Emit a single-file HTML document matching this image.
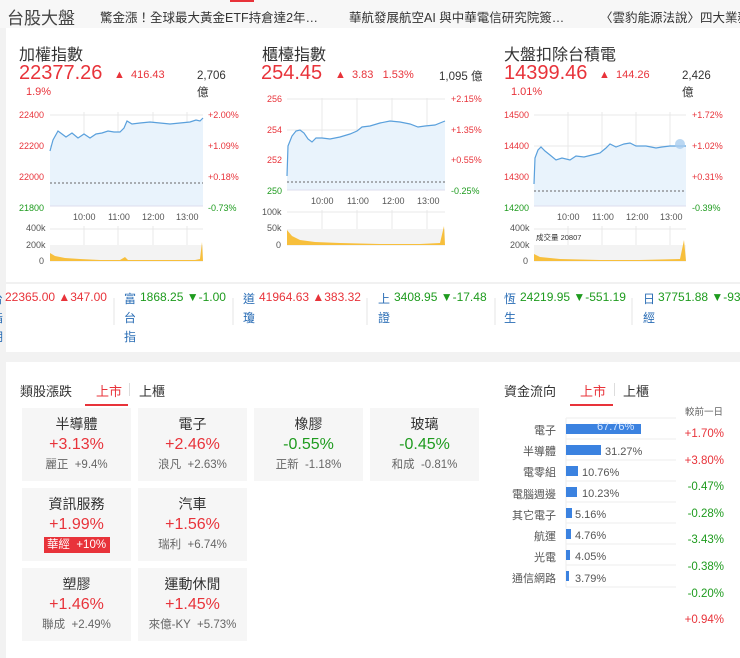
<!DOCTYPE html>
<html><head><meta charset="utf-8"><style>
*{margin:0;padding:0;box-sizing:border-box}
body{width:740px;height:658px;background:#f2f2f2;font-family:"Liberation Sans","Noto Sans CJK TC",sans-serif;position:relative;overflow:hidden;color:#333}
.a{position:absolute;white-space:nowrap}
.r{color:#e8333a}.g{color:#1e9b1e}.b{color:#2a6db5}
.card{position:absolute;background:#fff}
.tile{position:absolute;width:109px;height:73px;background:#f6f6f6;text-align:center}
.tile .n{font-size:14px;color:#333;margin-top:7px;line-height:18px}
.tile .p{font-size:16px;line-height:20px;margin-top:2px}
.tile .s{font-size:11.5px;color:#666;line-height:16px;margin-top:2px}
svg{position:absolute;overflow:visible}
svg text{font-family:"Liberation Sans",sans-serif;font-size:9px}
</style></head><body>
<div class="a" style="left:0;top:0;width:740px;height:28px;background:#f7f7f7"></div>
<div class="a" style="left:230px;top:0;width:24px;height:2px;background:#e8333a"></div>
<div class="a" style="left:7px;top:4px;font-size:17px;color:#444">台股大盤</div>
<div class="a" style="left:100px;top:7px;font-size:12.5px;color:#333">驚金漲！全球最大黃金ETF持倉達2年…</div>
<div class="a" style="left:349px;top:7px;font-size:12.5px;color:#333">華航發展航空AI 與中華電信研究院簽…</div>
<div class="a" style="left:600px;top:7px;font-size:12.5px;color:#333">〈雲豹能源法說〉四大業務</div>

<div class="card" style="left:6px;top:28px;width:734px;height:324px"></div>
<div class="card" style="left:6px;top:362px;width:734px;height:296px"></div>

<!-- panel1 -->
<div class="a" style="left:19px;top:41px;font-size:16px;color:#333">加權指數</div>
<div class="a r" style="left:19px;top:62px;font-size:20px">22377.26</div>
<div class="a r" style="left:114px;top:69px;font-size:11px">▲&nbsp; 416.43</div>
<div class="a r" style="left:26px;top:86px;font-size:11px">1.9%</div>
<div class="a" style="left:197px;top:68px;font-size:11.5px;line-height:17px;color:#333">2,706<br>億</div>
<!-- panel2 -->
<div class="a" style="left:262px;top:41px;font-size:16px;color:#333">櫃檯指數</div>
<div class="a r" style="left:261px;top:62px;font-size:20px">254.45</div>
<div class="a r" style="left:335px;top:69px;font-size:11px">▲&nbsp; 3.83 &nbsp;&nbsp;1.53%</div>
<div class="a" style="left:439px;top:68px;font-size:11.5px;color:#333">1,095 億</div>
<!-- panel3 -->
<div class="a" style="left:504px;top:41px;font-size:16px;color:#333">大盤扣除台積電</div>
<div class="a r" style="left:504px;top:62px;font-size:20px">14399.46</div>
<div class="a r" style="left:599px;top:69px;font-size:11px">▲&nbsp; 144.26</div>
<div class="a r" style="left:511px;top:86px;font-size:11px">1.01%</div>
<div class="a" style="left:682px;top:68px;font-size:11.5px;line-height:17px;color:#333">2,426<br>億</div>

<svg style="left:0;top:0" width="740" height="280">
<g stroke="#e8e8e8" stroke-width="1">
<line x1="84" y1="112" x2="84" y2="206"/><line x1="118" y1="112" x2="118" y2="206"/><line x1="153" y1="112" x2="153" y2="206"/><line x1="187" y1="112" x2="187" y2="206"/>
<line x1="50" y1="115" x2="203" y2="115"/><line x1="50" y1="146" x2="203" y2="146"/><line x1="50" y1="177" x2="203" y2="177"/>
<line x1="84" y1="226" x2="84" y2="262"/><line x1="118" y1="226" x2="118" y2="262"/><line x1="153" y1="226" x2="153" y2="262"/><line x1="187" y1="226" x2="187" y2="262"/>
<line x1="50" y1="229" x2="203" y2="229"/>
</g>
<rect x="50" y="245" width="153" height="17" fill="#f3f3f3"/>
<path d="M50 151 L53 140 L58 131 L62 134 L66 137 L72 133 L78 138 L84 134 L90 138 L96 134 L102 133 L108 131 L114 132 L120 132 L124 128 L127 121 L132 124 L140 123 L150 122 L160 123 L170 124 L180 123 L190 122 L196 120 L200 121 L203 118 L203 206 L50 206Z" fill="#e9f3fc"/>
<path d="M50 151 L53 140 L58 131 L62 134 L66 137 L72 133 L78 138 L84 134 L90 138 L96 134 L102 133 L108 131 L114 132 L120 132 L124 128 L127 121 L132 124 L140 123 L150 122 L160 123 L170 124 L180 123 L190 122 L196 120 L200 121 L203 118" fill="none" stroke="#5aa0dc" stroke-width="1.2"/>
<line x1="50" y1="183" x2="203" y2="183" stroke="#666" stroke-dasharray="2,2"/>
<line x1="50" y1="206" x2="203" y2="206" stroke="#dde" stroke-width="1"/>
<path d="M50 261 L50 253 L55 256 L65 258 L80 259 L100 260 L120 260 L125 257 L128 260 L160 260 L195 260 L200 259 L202 242 L203 261Z" fill="#f7bf3c"/>
<g fill="#e8333a"><text x="19" y="118">22400</text><text x="19" y="149">22200</text><text x="19" y="180">22000</text>
<text x="208" y="118">+2.00%</text><text x="208" y="149">+1.09%</text><text x="208" y="180">+0.18%</text></g>
<g fill="#1e9b1e"><text x="19" y="211">21800</text><text x="208" y="211">-0.73%</text></g>
<g fill="#555"><text x="73" y="220">10:00</text><text x="108" y="220">11:00</text><text x="142" y="220">12:00</text><text x="176" y="220">13:00</text>
<text x="26" y="231">400k</text><text x="26" y="248">200k</text><text x="39" y="264">0</text></g>

<g stroke="#e8e8e8" stroke-width="1">
<line x1="322" y1="98" x2="322" y2="191"/><line x1="357" y1="98" x2="357" y2="191"/><line x1="392" y1="98" x2="392" y2="191"/><line x1="427" y1="98" x2="427" y2="191"/>
<line x1="287" y1="99" x2="445" y2="99"/><line x1="287" y1="130" x2="445" y2="130"/><line x1="287" y1="160" x2="445" y2="160"/>
<line x1="322" y1="210" x2="322" y2="246"/><line x1="357" y1="210" x2="357" y2="246"/><line x1="392" y1="210" x2="392" y2="246"/><line x1="427" y1="210" x2="427" y2="246"/>
<line x1="287" y1="212" x2="445" y2="212"/>
</g>
<rect x="287" y="229" width="158" height="17" fill="#f3f3f3"/>
<path d="M287 176 L288 146 L292 136 L296 131 L300 130 L304 133 L308 139 L312 142 L316 138 L322 138 L330 139 L340 137 L350 134 L357 131 L362 127 L370 126 L380 123 L390 121 L400 122 L410 124 L418 127 L425 126 L435 125 L445 121 L445 190 L287 190Z" fill="#e9f3fc"/>
<path d="M287 176 L288 146 L292 136 L296 131 L300 130 L304 133 L308 139 L312 142 L316 138 L322 138 L330 139 L340 137 L350 134 L357 131 L362 127 L370 126 L380 123 L390 121 L400 122 L410 124 L418 127 L425 126 L435 125 L445 121" fill="none" stroke="#5aa0dc" stroke-width="1.2"/>
<line x1="287" y1="182" x2="445" y2="182" stroke="#666" stroke-dasharray="2,2"/>
<line x1="287" y1="190" x2="445" y2="190" stroke="#dde"/>
<path d="M287 245 L287 230 L292 236 L300 240 L315 242 L340 243 L380 244 L420 244 L440 243 L444 226 L445 245Z" fill="#f7bf3c"/>
<g fill="#e8333a"><text x="267" y="102">256</text><text x="267" y="133">254</text><text x="267" y="163">252</text>
<text x="451" y="102">+2.15%</text><text x="451" y="133">+1.35%</text><text x="451" y="163">+0.55%</text></g>
<g fill="#1e9b1e"><text x="267" y="194">250</text><text x="451" y="194">-0.25%</text></g>
<g fill="#555"><text x="311" y="204">10:00</text><text x="347" y="204">11:00</text><text x="382" y="204">12:00</text><text x="417" y="204">13:00</text>
<text x="262" y="215">100k</text><text x="267" y="231">50k</text><text x="276" y="248">0</text></g>

<g stroke="#e8e8e8" stroke-width="1">
<line x1="568" y1="112" x2="568" y2="206"/><line x1="602" y1="112" x2="602" y2="206"/><line x1="636" y1="112" x2="636" y2="206"/><line x1="670" y1="112" x2="670" y2="206"/>
<line x1="534" y1="115" x2="686" y2="115"/><line x1="534" y1="146" x2="686" y2="146"/><line x1="534" y1="177" x2="686" y2="177"/>
<line x1="568" y1="226" x2="568" y2="262"/><line x1="602" y1="226" x2="602" y2="262"/><line x1="636" y1="226" x2="636" y2="262"/><line x1="670" y1="226" x2="670" y2="262"/>
<line x1="534" y1="229" x2="686" y2="229"/>
</g>
<rect x="534" y="245" width="152" height="17" fill="#f3f3f3"/>
<path d="M534 184 L535 158 L538 150 L541 147 L545 151 L550 155 L556 160 L562 158 L570 160 L576 156 L584 157 L592 155 L600 153 L606 148 L610 144 L616 147 L624 144 L630 143 L636 146 L646 146 L656 148 L662 147 L670 146 L680 146 L686 146 L686 206 L534 206Z" fill="#e9f3fc"/>
<path d="M534 184 L535 158 L538 150 L541 147 L545 151 L550 155 L556 160 L562 158 L570 160 L576 156 L584 157 L592 155 L600 153 L606 148 L610 144 L616 147 L624 144 L630 143 L636 146 L646 146 L656 148 L662 147 L670 146 L680 146 L686 146" fill="none" stroke="#5aa0dc" stroke-width="1.2"/>
<circle cx="680" cy="144" r="5" fill="#a9cdef" opacity=".8"/>
<line x1="534" y1="191" x2="686" y2="191" stroke="#666" stroke-dasharray="2,2"/>
<line x1="534" y1="206" x2="686" y2="206" stroke="#dde"/>
<path d="M534 261 L534 254 L540 257 L560 259 L600 260 L640 260 L680 259 L684 240 L686 261Z" fill="#f7bf3c"/>
<g fill="#e8333a"><text x="504" y="118">14500</text><text x="504" y="149">14400</text><text x="504" y="180">14300</text>
<text x="692" y="118">+1.72%</text><text x="692" y="149">+1.02%</text><text x="692" y="180">+0.31%</text></g>
<g fill="#1e9b1e"><text x="504" y="211">14200</text><text x="692" y="211">-0.39%</text></g>
<g fill="#555"><text x="557" y="220">10:00</text><text x="592" y="220">11:00</text><text x="626" y="220">12:00</text><text x="660" y="220">13:00</text>
<text x="510" y="231">400k</text><text x="510" y="248">200k</text><text x="523" y="264">0</text>
<text x="536" y="240" style="font-size:7.5px" fill="#333">成交量 20807</text></g>
<line x1="6" y1="283" x2="740" y2="283" stroke="#e3e3e3"/>
<g stroke="#e5e5e5"><line x1="114" y1="298" x2="114" y2="325"/><line x1="233" y1="298" x2="233" y2="325"/><line x1="367" y1="298" x2="367" y2="325"/><line x1="495" y1="298" x2="495" y2="325"/><line x1="632" y1="298" x2="632" y2="325"/></g>
</svg>

<div class="a r" style="left:5px;top:290px;font-size:12px">22365.00 ▲347.00</div>
<div class="a b" style="left:-9px;top:290px;font-size:12px;line-height:19px">台<br>指<br>期</div>
<div class="a b" style="left:124px;top:290px;font-size:12px;line-height:19px">富<br>台<br>指</div>
<div class="a g" style="left:140px;top:290px;font-size:12px">1868.25 ▼-1.00</div>
<div class="a b" style="left:243px;top:290px;font-size:12px;line-height:19px">道<br>瓊</div>
<div class="a r" style="left:259px;top:290px;font-size:12px">41964.63 ▲383.32</div>
<div class="a b" style="left:378px;top:290px;font-size:12px;line-height:19px">上<br>證</div>
<div class="a g" style="left:394px;top:290px;font-size:12px">3408.95 ▼-17.48</div>
<div class="a b" style="left:504px;top:290px;font-size:12px;line-height:19px">恆<br>生</div>
<div class="a g" style="left:520px;top:290px;font-size:12px">24219.95 ▼-551.19</div>
<div class="a b" style="left:643px;top:290px;font-size:12px;line-height:19px">日<br>經</div>
<div class="a g" style="left:658px;top:290px;font-size:12px">37751.88 ▼-93.</div>

<div class="a" style="left:20px;top:381px;font-size:13px;color:#333">類股漲跌</div>
<div class="a r" style="left:96px;top:381px;font-size:13px">上市</div>
<div class="a" style="left:85px;top:404px;width:43px;height:2px;background:#e8333a"></div>
<div class="a" style="left:129px;top:383px;width:1px;height:13px;background:#ddd"></div>
<div class="a" style="left:139px;top:381px;font-size:13px;color:#333">上櫃</div>

<div class="tile" style="left:22px;top:408px"><div class="n">半導體</div><div class="p r">+3.13%</div><div class="s">麗正 &nbsp;+9.4%</div></div>
<div class="tile" style="left:138px;top:408px"><div class="n">電子</div><div class="p r">+2.46%</div><div class="s">浪凡 &nbsp;+2.63%</div></div>
<div class="tile" style="left:254px;top:408px"><div class="n">橡膠</div><div class="p g">-0.55%</div><div class="s">正新 &nbsp;-1.18%</div></div>
<div class="tile" style="left:370px;top:408px"><div class="n">玻璃</div><div class="p g">-0.45%</div><div class="s">和成 &nbsp;-0.81%</div></div>
<div class="tile" style="left:22px;top:488px"><div class="n">資訊服務</div><div class="p r">+1.99%</div><div class="s"><span style="background:#e8333a;color:#fff;padding:0 3px;display:inline-block;width:66px">華經 &nbsp;+10%</span></div></div>
<div class="tile" style="left:138px;top:488px"><div class="n">汽車</div><div class="p r">+1.56%</div><div class="s">瑞利 &nbsp;+6.74%</div></div>
<div class="tile" style="left:22px;top:568px"><div class="n">塑膠</div><div class="p r">+1.46%</div><div class="s">聯成 &nbsp;+2.49%</div></div>
<div class="tile" style="left:138px;top:568px"><div class="n">運動休閒</div><div class="p r">+1.45%</div><div class="s">來億-KY &nbsp;+5.73%</div></div>

<div class="a" style="left:504px;top:381px;font-size:13px;color:#333">資金流向</div>
<div class="a r" style="left:580px;top:381px;font-size:13px">上市</div>
<div class="a" style="left:570px;top:404px;width:43px;height:2px;background:#e8333a"></div>
<div class="a" style="left:614px;top:383px;width:1px;height:13px;background:#ddd"></div>
<div class="a" style="left:623px;top:381px;font-size:13px;color:#333">上櫃</div>
<div class="a" style="left:685px;top:404px;font-size:9.5px;color:#666">較前一日</div>
<svg style="left:0;top:0" width="740" height="658">
<g stroke="#eee"><line x1="566" y1="418" x2="676" y2="418"/><line x1="566" y1="439" x2="676" y2="439"/><line x1="566" y1="460" x2="676" y2="460"/><line x1="566" y1="481" x2="676" y2="481"/><line x1="566" y1="502" x2="676" y2="502"/><line x1="566" y1="523" x2="676" y2="523"/><line x1="566" y1="544" x2="676" y2="544"/><line x1="566" y1="565" x2="676" y2="565"/><line x1="566" y1="587" x2="676" y2="587"/><line x1="566" y1="418" x2="566" y2="587"/></g>
<g fill="#3b82e0"><rect x="566" y="424" width="75" height="10"/><rect x="566" y="445" width="35" height="10"/><rect x="566" y="466" width="12" height="10"/><rect x="566" y="487" width="11" height="10"/><rect x="566" y="508" width="6" height="10"/><rect x="566" y="529" width="5" height="10"/><rect x="566" y="550" width="4" height="10"/><rect x="566" y="571" width="3" height="10"/></g>
</svg>
<div class="a" style="left:490px;top:421px;width:66px;text-align:right;font-size:11px;line-height:21.2px;color:#555">電子<br>半導體<br>電零組<br>電腦週邊<br>其它電子<br>航運<br>光電<br>通信網路</div>
<div class="a" style="left:597px;top:421px;font-size:11px;color:#d8e8ff">67.76%</div>
<div class="a" style="left:605px;top:442px;font-size:11px;line-height:21.2px;color:#555">31.27%</div>
<div class="a" style="left:582px;top:463px;font-size:11px;line-height:21.2px;color:#555">10.76%<br>10.23%</div>
<div class="a" style="left:575px;top:505px;font-size:11px;line-height:21.2px;color:#555">5.16%<br>4.76%<br>4.05%<br>3.79%</div>
<div class="a" style="left:660px;top:421px;width:64px;text-align:right;font-size:11.5px;line-height:26.6px">
<span class="r">+1.70%</span><br><span class="r">+3.80%</span><br><span class="g">-0.47%</span><br><span class="g">-0.28%</span><br><span class="g">-3.43%</span><br><span class="g">-0.38%</span><br><span class="g">-0.20%</span><br><span class="r">+0.94%</span></div>
</body></html>
